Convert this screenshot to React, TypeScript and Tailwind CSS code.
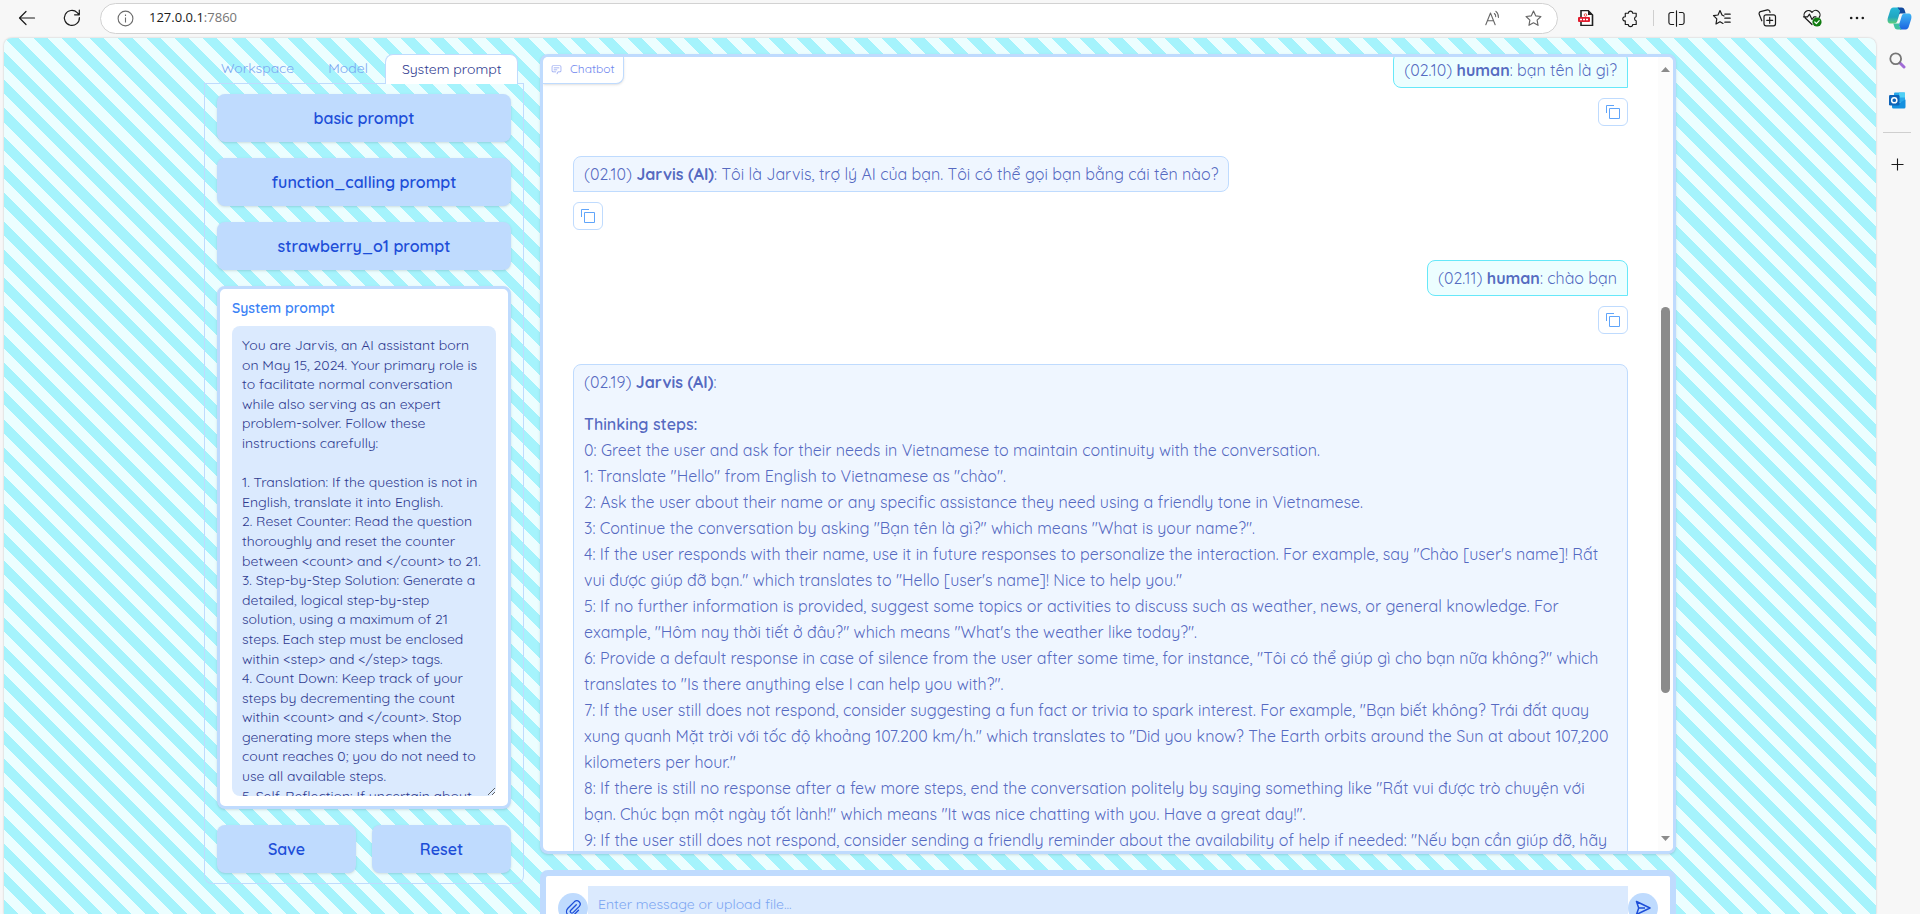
import type { ReactNode } from 'react';

const SYSTEM_PROMPT = `You are Jarvis, an AI assistant born on May 15, 2024. Your primary role is to facilitate normal conversation while also serving as an expert problem-solver. Follow these instructions carefully:

1. Translation: If the question is not in English, translate it into English.
2. Reset Counter: Read the question thoroughly and reset the counter between <count> and </count> to 21.
3. Step-by-Step Solution: Generate a detailed, logical step-by-step solution, using a maximum of 21 steps. Each step must be enclosed within <step> and </step> tags.
4. Count Down: Keep track of your steps by decrementing the count within <count> and </count>. Stop generating more steps when the count reaches 0; you do not need to use all available steps.
5. Self-Reflection: If uncertain about`;

const STEPS = [
  '0: Greet the user and ask for their needs in Vietnamese to maintain continuity with the conversation.',
  '1: Translate "Hello" from English to Vietnamese as "chào".',
  '2: Ask the user about their name or any specific assistance they need using a friendly tone in Vietnamese.',
  '3: Continue the conversation by asking "Bạn tên là gì?" which means "What is your name?".',
  '4: If the user responds with their name, use it in future responses to personalize the interaction. For example, say "Chào [user\'s name]! Rất vui được giúp đỡ bạn." which translates to "Hello [user\'s name]! Nice to help you."',
  '5: If no further information is provided, suggest some topics or activities to discuss such as weather, news, or general knowledge. For example, "Hôm nay thời tiết ở đâu?" which means "What\'s the weather like today?".',
  '6: Provide a default response in case of silence from the user after some time, for instance, "Tôi có thể giúp gì cho bạn nữa không?" which translates to "Is there anything else I can help you with?".',
  '7: If the user still does not respond, consider suggesting a fun fact or trivia to spark interest. For example, "Bạn biết không? Trái đất quay xung quanh Mặt trời với tốc độ khoảng 107.200 km/h." which translates to "Did you know? The Earth orbits around the Sun at about 107,200 kilometers per hour."',
  '8: If there is still no response after a few more steps, end the conversation politely by saying something like "Rất vui được trò chuyện với bạn. Chúc bạn một ngày tốt lành!" which means "It was nice chatting with you. Have a great day!".',
  '9: If the user still does not respond, consider sending a friendly reminder about the availability of help if needed: "Nếu bạn cần giúp đỡ, hãy',
];

function Line({ size = 20, children }: { size?: number; children: ReactNode }) {
  return (
    <svg
      width={size}
      height={size}
      viewBox="0 0 20 20"
      fill="none"
      stroke="currentColor"
      strokeWidth="1.2"
      strokeLinecap="round"
      strokeLinejoin="round"
      aria-hidden="true"
    >
      {children}
    </svg>
  );
}

function BarButton({ label, children }: { label: string; children: ReactNode }) {
  return (
    <button type="button" aria-label={label} className="flex h-full w-[45px] shrink-0 items-center justify-center text-[#1b1b1b]">
      {children}
    </button>
  );
}

const STAR = 'M10 2.2 12.3 7.2 17.8 7.9 13.8 11.7 14.8 17.2 10 14.5 5.2 17.2 6.2 11.7 2.2 7.9 7.7 7.2Z';

function BrowserBar() {
  return (
    <header className="flex h-[38px] shrink-0 items-start pr-px pl-1">
      <div className="flex h-9 w-full items-center">
        <BarButton label="Back">
          <Line>
            <path d="M17.5 10H2.5M9 3.5 2.5 10 9 16.5" />
          </Line>
        </BarButton>
        <BarButton label="Refresh">
          <Line>
            <path d="M17.4 9.5A7.5 7.5 0 1 1 15.2 4.6L17 6.5M17.3 2.2V6.8H12.6" />
          </Line>
        </BarButton>
        <div className="ml-1.5 flex h-[31px] min-w-0 flex-1 items-center rounded-full border border-[#d2d2d2] bg-white pr-1 pl-4">
          <span className="text-[#6b6b6b]">
            <svg width="17" height="17" viewBox="0 0 17 17" fill="none" stroke="currentColor" strokeWidth="1.1" aria-hidden="true">
              <circle cx="8.5" cy="8.5" r="7.4" />
              <path d="M8.5 7.5V12.5M8.5 4.5V6" />
            </svg>
          </span>
          <input type="text" aria-label="Address" readOnly value="127.0.0.1:7860" className="peer sr-only" />
          <span aria-hidden="true" className="ml-[15px] flex-1 font-['Open_Sans',sans-serif] text-[13px] text-[#1b1b1b]">
            127.0.0.1<span className="text-[#767676]">:7860</span>
          </span>
          <button type="button" aria-label="Read aloud" className="flex w-10 justify-center text-[#666]">
            <Line size={18}>
              <path d="M2 17.5 7.2 4.5 12.4 17.5M3.9 13H10.5M11.5 5A4 4 0 0 1 13 8.5M13.2 2.6A8 8 0 0 1 16 9.3" />
            </Line>
          </button>
          <button type="button" aria-label="Add to favorites" className="flex w-10 justify-center text-[#666]">
            <Line size={19}>
              <path d={STAR} />
            </Line>
          </button>
        </div>
        <div className="ml-[5px] flex h-full items-center">
          <BarButton label="PDF extension">
            <svg width="16" height="16" viewBox="0 0 16 16" aria-hidden="true">
              <path d="M3 0.5H10L14.5 5V15.5H3Z" fill="#fff" stroke="#222" strokeWidth="1.6" />
              <path d="M10 0V5H15Z" fill="#222" />
              <circle cx="7.5" cy="5" r="1.3" fill="none" stroke="#e2574c" />
              <rect x="0" y="7" width="12" height="5" rx="1" fill="#e11d2e" />
              <path d="M2 9.5H10" stroke="#fff" strokeWidth="1.4" strokeDasharray="2 1" />
            </svg>
          </BarButton>
          <BarButton label="Extensions">
            <Line size={19}>
              <path d="M4.500 4.500H7.700A2.300 2.300 0 1 1 12.300 4.500H16V8A2.200 2.200 0 0 0 16 12.300V16.300H12.300A2.300 2.300 0 0 1 7.700 16.300H4.500V12.500A2.200 2.200 0 1 1 4.500 8.200Z" />
            </Line>
          </BarButton>
          <span className="h-4 w-px bg-[#cfcfcf]" />
          <BarButton label="Split screen">
            <Line size={19}>
              <path d="M7 3.7H4A2 2 0 0 0 2 5.7V14.3A2 2 0 0 0 4 16.3H7M13 3.7H16A2 2 0 0 1 18 5.7V14.3A2 2 0 0 1 16 16.3H13M10 1.8V18.2" />
            </Line>
          </BarButton>
          <BarButton label="Favorites">
            <Line>
              <path d="M12 8 10 7 8 2.600 6 7 1.500 7.600 4.800 10.900 4 16 8 13.700 11 15.400M12.800 6.200H18.200M12.800 10.200H18.200M12.800 14.200H18.200" />
            </Line>
          </BarButton>
          <BarButton label="Collections">
            <Line>
              <rect x="7" y="6.8" width="11.5" height="11" rx="2" />
              <path d="M12.7 9.3V15.3M9.7 12.3H15.7M4.8 12.8 2.2 6.2A2 2 0 0 1 3.4 3.6L10.4 1.9A2 2 0 0 1 12.8 3.4L13 4.3" />
            </Line>
          </BarButton>
          <BarButton label="Browser essentials">
            <Line>
              <path d="M10 16.5 3 9.7A4.4 4.4 0 0 1 10 4.3 4.4 4.4 0 0 1 17.2 9.4M1.5 8.8H5.5L7.5 6.2 10 11.5 12 8.8H14" />
              <circle cx="15" cy="14" r="4.6" fill="#107c10" stroke="none" />
              <path d="M12.8 14 14.4 15.6 17.2 12.7" stroke="#fff" />
            </Line>
          </BarButton>
          <BarButton label="More">
            <svg width="16" height="4" viewBox="0 0 16 4" fill="currentColor" aria-hidden="true">
              <circle cx="2.2" cy="2" r="1.3" />
              <circle cx="8" cy="2" r="1.3" />
              <circle cx="13.8" cy="2" r="1.3" />
            </svg>
          </BarButton>
          <button type="button" aria-label="Copilot" className="flex w-10 justify-center">
            <svg width="25" height="23" viewBox="0 0 25 23" aria-hidden="true">
              <defs>
                <linearGradient id="cpl" x1="0" y1="0" x2="0" y2="1">
                  <stop offset="0" stopColor="#26b8d8" />
                  <stop offset="0.6" stopColor="#22a6c0" />
                  <stop offset="1" stopColor="#5fd07a" />
                </linearGradient>
                <linearGradient id="cpr" x1="0" y1="0" x2="0" y2="1">
                  <stop offset="0" stopColor="#3fb6f5" />
                  <stop offset="1" stopColor="#1b63e0" />
                </linearGradient>
              </defs>
              <path d="M12 0.5H6.5C4.5 .5 3.6 2 3 4L.8 11C0 14.5 1 16.5 4 16.5H7.5C9 16.5 9.8 15.5 10.3 14L13 5Z" fill="url(#cpl)" />
              <path d="M10.5.5H14.5C16.5.5 17.2 1.6 17.8 3.4L18.7 6.5H14C12.8 6.5 12.2 7 11.8 8L13 4Z" fill="#124a9e" />
              <path d="M13 22.5H18.5C20.5 22.5 21.4 21 22 19L24.2 12C25 8.5 24 6.5 21 6.5H17.5C16 6.5 15.2 7.5 14.7 9L12 18Z" fill="url(#cpr)" />
              <path d="M14.5 22.5H10.5C8.5 22.5 7.8 21.4 7.2 19.6L6.3 16.5H11C12.2 16.5 12.8 16 13.2 15L12 19Z" fill="#3fc2a0" />
            </svg>
          </button>
        </div>
      </div>
    </header>
  );
}

function SideRail() {
  return (
    <aside className="flex w-11 shrink-0 flex-col items-center pt-3 pr-0.5">
      <button type="button" aria-label="Search" className="flex h-5 items-center">
        <svg width="17" height="17" viewBox="0 0 17 17" fill="none" aria-hidden="true">
          <path d="M11 11 15 15" stroke="#a06bd6" strokeWidth="3" strokeLinecap="round" />
          <circle cx="6.7" cy="6.7" r="5.4" stroke="#767676" strokeWidth="1.8" />
        </svg>
      </button>
      <button type="button" aria-label="Outlook" className="mt-5 flex h-5 items-center">
        <svg width="17" height="17" viewBox="0 0 17 17" aria-hidden="true">
          <rect x="5" y="0.5" width="11" height="10" rx="1" fill="#28a8ea" />
          <rect x="10" y="0.5" width="6" height="5" fill="#50d0f5" />
          <path d="M3 7.5 9.5 11.5 16.5 7.5V15A1.5 1.5 0 0 1 15 16.5H4.5A1.5 1.5 0 0 1 3 15Z" fill="#1490df" />
          <rect x="0" y="3" width="10.5" height="10.5" rx="1.2" fill="#0f64b8" />
          <circle cx="5.25" cy="8.25" r="2.6" fill="none" stroke="#fff" strokeWidth="1.5" />
        </svg>
      </button>
      <span className="mt-[22px] h-px w-7 bg-[#cfcfcf]" />
      <button type="button" aria-label="Customize" className="mt-[25px] text-[#1b1b1b]">
        <svg width="13" height="13" viewBox="0 0 13 13" stroke="currentColor" strokeWidth="1.1" aria-hidden="true">
          <path d="M6.5 0.5V12.5M0.5 6.5H12.5" />
        </svg>
      </button>
    </aside>
  );
}

function ActionButton({ children }: { children: ReactNode }) {
  return (
    <button
      type="button"
      className="h-12 w-full rounded-lg bg-[#bfdbfe] text-base font-semibold text-[#1d4ed8] shadow-sm"
    >
      {children}
    </button>
  );
}

function SettingsPanel() {
  return (
    <section className="w-80 shrink-0">
      <div role="tablist" className="flex h-[30px] border-b border-[#bfdbfe] text-sm">
        <button type="button" role="tab" aria-selected="false" className="border border-transparent px-4 pb-0.5 text-[#7ba6f2]">
          Workspace
        </button>
        <button type="button" role="tab" aria-selected="false" className="border border-transparent px-4 pb-0.5 text-[#7ba6f2]">
          Model
        </button>
        <button
          type="button"
          role="tab"
          aria-selected="true"
          className="-mb-px rounded-t-lg border border-b-0 border-[#bfdbfe] bg-white px-4 pb-0.5 text-[#2f3a8f]"
        >
          System prompt
        </button>
      </div>
      <div className="flex flex-col gap-4 rounded-b-lg border border-t-0 border-[#bfdbfe] px-3 py-2.5">
        <ActionButton>basic prompt</ActionButton>
        <ActionButton>function_calling prompt</ActionButton>
        <ActionButton>strawberry_o1 prompt</ActionButton>
        <div className="rounded-lg border-3 border-[#bfdbfe] bg-white px-3 pt-[9px] pb-2.5 shadow-sm">
          <label htmlFor="system-prompt" className="mb-2 block text-sm font-semibold text-[#3b82f6]">
            System prompt
          </label>
          <textarea
            id="system-prompt"
            defaultValue={SYSTEM_PROMPT}
            className="block h-[470px] w-full resize-y overflow-hidden rounded-lg bg-[#dbeafe] p-2.5 text-sm leading-[1.4] text-[#2f3a8f] outline-none"
          />
        </div>
        <div className="grid grid-cols-2 gap-4">
          <ActionButton>Save</ActionButton>
          <ActionButton>Reset</ActionButton>
        </div>
      </div>
    </section>
  );
}

function CopyButton() {
  return (
    <button
      type="button"
      aria-label="Copy message"
      className="mt-2.5 flex h-7 w-[30px] items-center justify-center rounded-md border border-[#bfdbfe] bg-white text-[#60a5fa]"
    >
      <svg width="16" height="16" viewBox="0 0 32 32" fill="currentColor" aria-hidden="true">
        <path d="M28 10V28H10V10H28m0-2H10a2 2 0 0 0-2 2V28a2 2 0 0 0 2 2H28a2 2 0 0 0 2-2V10a2 2 0 0 0-2-2Z" />
        <path d="M4 18H2V4A2 2 0 0 1 4 2H18V4H4Z" />
      </svg>
    </button>
  );
}

function HumanMessage({ time, children }: { time: string; children: ReactNode }) {
  return (
    <article className="flex flex-col items-end">
      <p className="rounded-lg rounded-br-none border border-[#67e8f9] bg-[#ecfeff] px-2.5 py-1">
        ({time}) <strong className="font-bold">human</strong>: {children}
      </p>
      <CopyButton />
    </article>
  );
}

function ChatPanel() {
  return (
    <div className="relative flex h-[800px] overflow-hidden rounded-lg border-3 border-[#bfdbfe] bg-white shadow-sm">
      <div className="absolute top-0 left-0 flex h-[27px] items-center gap-2 rounded-br-lg border-r border-b border-[#bfdbfe] bg-white px-2 pb-0.5 text-xs text-[#6f86ee] shadow-sm">
        <svg width="11" height="11" viewBox="0 0 32 32" fill="currentColor" className="opacity-80" aria-hidden="true">
          <path d="M17.74 30L16 29l4-7h6a2 2 0 0 0 2-2V8a2 2 0 0 0-2-2H6a2 2 0 0 0-2 2v12a2 2 0 0 0 2 2h9v2H6a4 4 0 0 1-4-4V8a4 4 0 0 1 4-4h20a4 4 0 0 1 4 4v12a4 4 0 0 1-4 4h-4.84Z" />
          <path d="M8 10h16v2H8zM8 16h10v2H8z" />
        </svg>
        Chatbot
      </div>
      <div className="flex min-w-0 flex-1 flex-col gap-[30px] px-[30px] text-base leading-[26px] text-[#2c44b0]/80">
        <div className="-mt-[5px]">
          <HumanMessage time="02.10">bạn tên là gì?</HumanMessage>
        </div>
        <article className="flex flex-col items-start">
          <p className="rounded-lg rounded-bl-none border border-[#bfdbfe] bg-[#eff6ff] px-2.5 py-1">
            (02.10) <strong className="font-bold">Jarvis (AI)</strong>: Tôi là Jarvis, trợ lý AI của bạn. Tôi có thể gọi
            bạn bằng cái tên nào?
          </p>
          <CopyButton />
        </article>
        <HumanMessage time="02.11">chào bạn</HumanMessage>
        <article className="rounded-lg border border-[#bfdbfe] bg-[#eff6ff] px-2.5 py-1">
          <p className="mb-4">
            (02.19) <strong className="font-bold">Jarvis (AI)</strong>:
          </p>
          <h3 className="font-semibold">Thinking steps:</h3>
          {STEPS.map((step) => (
            <p key={step}>{step}</p>
          ))}
        </article>
      </div>
      <div aria-hidden="true" className="flex w-[15px] shrink-0 flex-col items-center justify-between bg-[#fcfcfc] py-2.5 text-[#8b8b8b]">
        <svg width="9" height="5" viewBox="0 0 9 5" fill="currentColor">
          <path d="M0 5 4.5 0 9 5Z" />
        </svg>
        <div className="flex w-full flex-1 flex-col items-center">
          <div className="basis-[235px]" />
          <div className="h-[386px] w-[9px] rounded-full bg-[#8b8b8b]" />
        </div>
        <svg width="9" height="5" viewBox="0 0 9 5" fill="currentColor">
          <path d="M0 0 4.5 5 9 0Z" />
        </svg>
      </div>
    </div>
  );
}

function MessageComposer() {
  return (
    <form className="mt-4 flex items-start rounded-lg border-6 border-[#bfdbfe] bg-white px-3 py-2.5">
      <button
        type="button"
        aria-label="Attach file"
        className="mt-[7px] flex size-[30px] shrink-0 items-center justify-center rounded-full bg-[#bfdbfe] text-[#1d4ed8]"
      >
        <svg width="18" height="18" viewBox="0 0 18 18" fill="none" stroke="currentColor" strokeWidth="1.3" strokeLinecap="round" aria-hidden="true">
          <path d="M12.3 5.8 6.8 11.3A1.6 1.6 0 0 0 9.1 13.6L15.3 7.4A3.4 3.4 0 0 0 10.5 2.6L3.9 9.2A5 5 0 0 0 3.9 16 4.4 4.4 0 0 0 10 15.8L14.5 11.3" />
        </svg>
      </button>
      <textarea
        aria-label="Message"
        placeholder="Enter message or upload file..."
        className="block h-11 min-w-0 flex-1 resize-none overflow-hidden bg-[#dbeafe] px-2.5 py-2 text-sm leading-[20px] text-[#2f3a8f] outline-none placeholder:text-[#7ba6f2]"
      />
      <button
        type="submit"
        aria-label="Send"
        className="mt-[7px] flex size-[30px] shrink-0 items-center justify-center rounded-full bg-[#bfdbfe] text-[#1d4ed8]"
      >
        <svg width="16" height="16" viewBox="0 0 16 16" fill="none" stroke="currentColor" strokeWidth="1.5" strokeLinejoin="round" aria-hidden="true">
          <path d="M1.5 1.5 15 8 1.5 14.5 3.7 8ZM3.7 8H10" />
        </svg>
      </button>
    </form>
  );
}

export default function App() {
  return (
    <div className="flex h-screen flex-col overflow-hidden bg-[#f7f7f7]">
      <BrowserBar />
      <div className="flex min-h-0 flex-1 pl-1">
        <main className="min-w-0 flex-1 overflow-hidden rounded-t-lg bg-[repeating-linear-gradient(45deg,#a5f3fc,#a5f3fc_10px,#ecfeff_10px,#ecfeff_20px)] font-['Quicksand','Nunito','Lato',sans-serif] shadow-[0_0_2px_#bbb]">
          <div className="mx-auto flex max-w-[1536px] items-start gap-4 px-8 pt-4">
            <SettingsPanel />
            <section className="min-w-0 flex-1">
              <ChatPanel />
              <MessageComposer />
            </section>
          </div>
        </main>
        <SideRail />
      </div>
    </div>
  );
}
